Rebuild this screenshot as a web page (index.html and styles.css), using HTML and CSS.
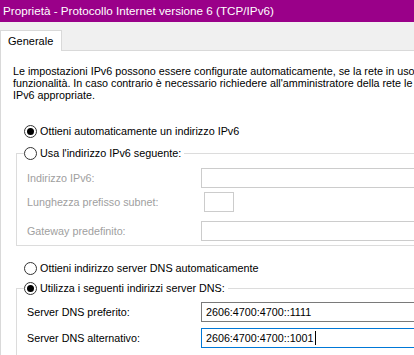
FILE: index.html
```html
<!DOCTYPE html>
<html lang="it">
<head>
  <meta charset="UTF-8">
  <title>Proprietà - Protocollo Internet versione 6 (TCP/IPv6)</title>
  <link rel="stylesheet" href="styles.css">
</head>
<body>
  <div class="titlebar">Proprietà - Protocollo Internet versione 6 (TCP/IPv6)</div>
  <div class="dialog">
    <div class="tabs">
      <div class="tab">Generale</div>
    </div>
    <div class="panel">
      <p class="intro">Le impostazioni IPv6 possono essere configurate automaticamente, se la rete in uso supporta tale<br>funzionalità. In caso contrario è necessario richiedere all'amministratore della rete le impostazioni<br>IPv6 appropriate.</p>

      <label class="radio radio-first"><span class="dot checked"></span>Ottieni automaticamente un indirizzo IPv6</label>

      <fieldset class="group group-ip">
        <legend><label class="radio"><span class="dot"></span>Usa l'indirizzo IPv6 seguente:</label></legend>
        <div class="field field-addr disabled">
          <span class="field-label">Indirizzo IPv6:</span>
          <span class="input wide"></span>
        </div>
        <div class="field field-prefix disabled">
          <span class="field-label">Lunghezza prefisso subnet:</span>
          <span class="input short"></span>
        </div>
        <div class="field field-gw disabled">
          <span class="field-label">Gateway predefinito:</span>
          <span class="input wide"></span>
        </div>
      </fieldset>

      <label class="radio radio-dns-auto"><span class="dot"></span>Ottieni indirizzo server DNS automaticamente</label>

      <fieldset class="group group-dns">
        <legend><label class="radio"><span class="dot checked"></span>Utilizza i seguenti indirizzi server DNS:</label></legend>
        <div class="field field-dns1">
          <span class="field-label">Server DNS preferito:</span>
          <span class="input wide active">2606:4700:4700::1111</span>
        </div>
        <div class="field field-dns2">
          <span class="field-label">Server DNS alternativo:</span>
          <span class="input wide focused">2606:4700:4700::1001<span class="caret"></span></span>
        </div>
      </fieldset>
    </div>
  </div>
</body>
</html>
```

FILE: styles.css
```css
body {
  margin: 0;
  width: 414px;
  height: 355px;
  overflow: hidden;
  background: #f0f0f0;
  font-family: 'Liberation Sans', Arial, sans-serif;
  font-size: 10.75px;
  color: #000;
}

.titlebar {
  height: 22px;
  line-height: 22px;
  background: #9a0089;
  color: #fff;
  padding-left: 3px;
  font-size: 11.7px;
  white-space: nowrap;
}

.tabs {
  display: flex;
  padding-top: 8px;
}

.tab {
  height: 20px;
  line-height: 20px;
  padding: 0 8px 0 7px;
  background: #fff;
  border: 1px solid #d9d9d9;
  border-bottom: none;
  margin-bottom: -1px;
  position: relative;
  z-index: 1;
  font-size: 11px;
}

.panel {
  background: #fff;
  border-top: 1px solid #d9d9d9;
  border-left: 1px solid #d9d9d9;
  height: 320px;
  white-space: nowrap;
  overflow: hidden;
}

.intro {
  margin: 14px 0 0 12px;
  line-height: 12px;
}

.radio {
  display: flex;
  align-items: center;
  height: 16px;
  font-size: 10.8px;
}

.radio-first {
  margin: 22px 0 0 23px;
}

.radio-dns-auto {
  margin: 14px 0 0 23px;
}

.dot {
  width: 11px;
  height: 11px;
  border: 1px solid #333;
  border-radius: 50%;
  margin-right: 3px;
  display: flex;
  align-items: center;
  justify-content: center;
  flex: none;
}

.dot.checked::after {
  content: '';
  width: 7px;
  height: 7px;
  border-radius: 50%;
  background: #000;
}

.group {
  margin: 0 -20px 0 15px;
  padding: 0 0 0 10px;
  border: 1px solid #dcdcdc;
  min-width: 0;
}

.group legend {
  padding: 0 3px 0 0;
  margin-left: -3px;
}

.group-ip {
  margin-top: 6px;
  padding-top: 7px;
  padding-bottom: 4px;
}

.group-dns {
  margin-top: 4px;
  padding-top: 6px;
  padding-bottom: 7px;
}

.field {
  display: flex;
  align-items: center;
}

.field-label {
  width: 177px;
}

.field + .field {
  margin-top: 4px;
}

.field-gw {
  margin-top: 9px !important;
}

.field-dns2 {
  margin-top: 6px !important;
}

.disabled .field-label {
  color: #a0a0a0;
}

.input {
  display: flex;
  align-items: center;
  height: 18px;
  border: 1px solid #cccccc;
  background: #fff;
  padding-left: 4px;
  box-sizing: content-box;
}

.input.wide {
  width: 230px;
}

.input.short {
  width: 28px;
  padding-left: 0;
}

.input.active {
  border-color: #7a7a7a;
}

.input.focused {
  border-color: #0078d7;
}

.caret {
  width: 1px;
  height: 14px;
  background: #000;
  margin-left: 1px;
}
```
